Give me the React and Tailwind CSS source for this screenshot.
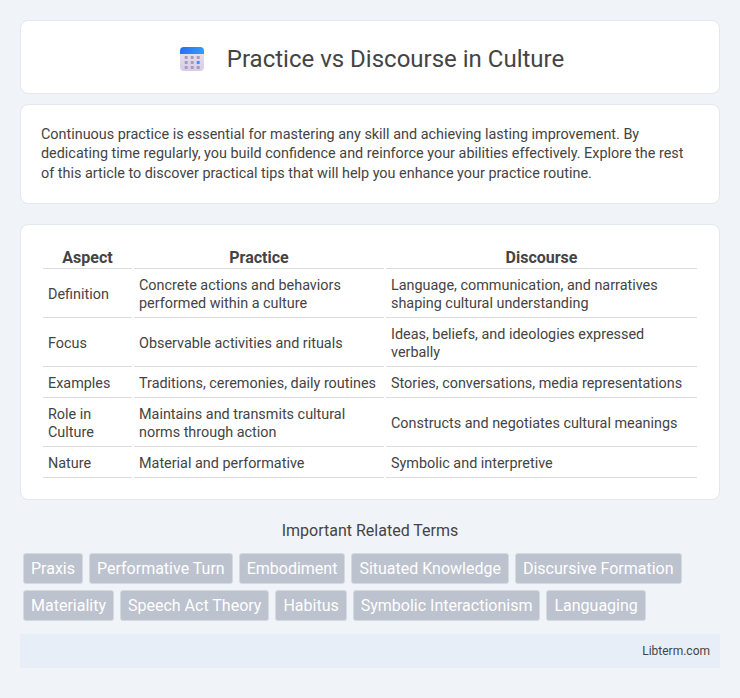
const rows = [
  ["Definition", "Concrete actions and behaviors performed within a culture", "Language, communication, and narratives shaping cultural understanding"],
  ["Focus", "Observable activities and rituals", "Ideas, beliefs, and ideologies expressed verbally"],
  ["Examples", "Traditions, ceremonies, daily routines", "Stories, conversations, media representations"],
  ["Role in Culture", "Maintains and transmits cultural norms through action", "Constructs and negotiates cultural meanings"],
  ["Nature", "Material and performative", "Symbolic and interpretive"],
]

const terms = [
  "Praxis",
  "Performative Turn",
  "Embodiment",
  "Situated Knowledge",
  "Discursive Formation",
  "Materiality",
  "Speech Act Theory",
  "Habitus",
  "Symbolic Interactionism",
  "Languaging",
]

const CalendarIcon = () => (
  <svg width="32" height="32" viewBox="0 0 32 32" fill="none" className="shrink-0">
    <defs>
      <linearGradient id="cal-body" x1="16" y1="8" x2="16" y2="28" gradientUnits="userSpaceOnUse">
        <stop stopColor="#e6e1ee" />
        <stop offset="1" stopColor="#d9cbea" />
      </linearGradient>
      <linearGradient id="cal-top" x1="4" y1="4" x2="28" y2="11" gradientUnits="userSpaceOnUse">
        <stop stopColor="#2a6cf0" />
        <stop offset="1" stopColor="#2ea0ff" />
      </linearGradient>
    </defs>
    <rect x="4" y="4" width="24" height="24" rx="4" fill="url(#cal-body)" />
    <path d="M4 11V8a4 4 0 0 1 4-4h16a4 4 0 0 1 4 4v3H4Z" fill="url(#cal-top)" />
    {[10, 15, 20].map((y) =>
      [9, 15, 21].map((x) => (
        <rect key={`${x}-${y}`} x={x - 0.3} y={y + 3} width="3" height="3" rx="0.4" fill={x === 21 && y === 15 ? "#2b9bff" : "#a79fb0"} />
      ))
    )}
  </svg>
)

export default function App() {
  return (
    <div className="min-h-[698px] bg-[#f0f4f9] px-5 pt-5 pb-[30px] font-['Roboto',sans-serif] text-[#444]">
      <div className="flex items-center justify-center gap-[19px] rounded-lg border border-[#e2e7f0] bg-white px-5 pt-[22px] pb-[18px]">
        <CalendarIcon />
        <h1 className="text-2xl font-normal">Practice vs Discourse in Culture</h1>
      </div>

      <div className="mt-2.5 rounded-lg border border-[#e2e7f0] bg-white p-5">
        <p className="text-[14.4px] leading-[19.3px]">
          Continuous practice is essential for mastering any skill and achieving lasting improvement. By dedicating time regularly, you build confidence and reinforce your abilities effectively. Explore the rest of this article to discover practical tips that will help you enhance your practice routine.
        </p>
      </div>

      <div className="mt-5 rounded-lg border border-[#e2e7f0] bg-white px-5 pt-5 pb-[19px]">
        <table className="w-full table-fixed border-separate border-spacing-0.5 text-[14.4px] leading-[18px]">
          <thead>
            <tr>
              <th className="w-[89px] border-b border-[#ddd] text-base font-bold leading-[21px]">Aspect</th>
              <th className="w-[250px] border-b border-[#ddd] text-base font-bold leading-[21px]">Practice</th>
              <th className="border-b border-[#ddd] text-base font-bold leading-[21px]">Discourse</th>
            </tr>
          </thead>
          <tbody>
            {rows.map((row) => (
              <tr key={row[0]}>
                {row.map((cell) => (
                  <td key={cell} className="border-b border-[#ddd] px-[5px] pt-1.5 pb-1">{cell}</td>
                ))}
              </tr>
            ))}
          </tbody>
        </table>
      </div>

      <h2 className="mt-5 text-center text-base font-normal leading-[21px]">Important Related Terms</h2>

      <div className="mt-3 flex flex-wrap gap-1.5 px-[3px]">
        {terms.map((term) => (
          <span key={term} className="rounded-[3px] border border-[#d5d9e0] bg-[#bcc2ce] px-[7px] py-[4px] text-base leading-[21px] text-white">
            {term}
          </span>
        ))}
      </div>

      <div className="mt-[13px] bg-[#e8eef8] px-2.5 py-[10px] text-right text-xs leading-[14px]">
        Libterm.com
      </div>
    </div>
  )
}
